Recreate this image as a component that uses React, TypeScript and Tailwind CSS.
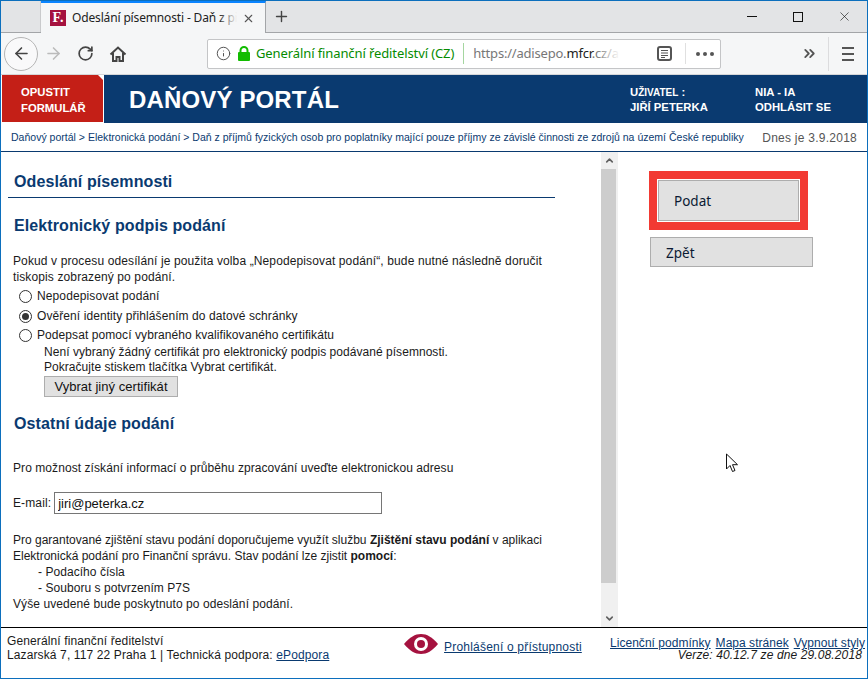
import React from 'react'
import { ArrowLeft, ArrowRight, RotateCw, Plus, X, Info, ChevronsRight, ChevronUp, ChevronDown } from 'lucide-react'

const Tabs = () => {
  return (
    <div className="flex h-[32px] bg-[#e3e4e6] border-b border-[#a3a5a8]">
      <div className="w-[40px] border-r border-[#c9cacc]"></div>
      <div className="w-[225px] h-[32px] bg-[#f5f6f7] border-t-2 border-t-[#0a84ff] border-r border-r-[#a3a5a8] flex items-center pl-[9px] pr-[10px]">
        <div className="w-[16px] h-[16px] bg-[#a5123f] flex items-center justify-center text-white font-bold text-[14px] leading-none font-['Liberation_Serif',serif]">F.</div>
        <div className="relative ml-[6px] w-[165px] overflow-hidden whitespace-nowrap text-[12px] tracking-[-0.15px] text-[#222] font-['Noto_Sans',sans-serif]">
          Odeslání písemnosti - Daň z příj
          <div className="absolute top-0 right-0 w-[18px] h-full bg-gradient-to-r from-transparent to-[#f5f6f7]"></div>
        </div>
        <X size={13} strokeWidth={2} className="ml-auto text-[#555]" />
      </div>
      <div className="w-[31px] flex items-center justify-center">
        <Plus size={17} strokeWidth={2} className="text-[#444]" />
      </div>
      <div className="ml-auto flex items-center text-[#111]">
        <div className="w-[46px] flex justify-center"><div className="w-[10px] h-px bg-[#111]"></div></div>
        <div className="w-[46px] flex justify-center"><div className="w-[10px] h-[10px] border border-[#111]"></div></div>
        <div className="w-[46px] flex justify-center"><X size={15} strokeWidth={1} /></div>
      </div>
    </div>
  )
}

const Toolbar = () => {
  return (
    <div className="flex items-center h-[42px] bg-[#f5f6f7] border-b border-[#d5d6d8] pl-[3px] text-[#444]">
      <div className="w-[34px] h-[34px] rounded-full border border-[#b5b5b5] bg-[#f9f9fa] flex items-center justify-center shrink-0">
        <ArrowLeft size={19} strokeWidth={2} className="text-[#444]" />
      </div>
      <ArrowRight size={19} strokeWidth={2} className="ml-[6px] text-[#bbb] shrink-0" />
      <RotateCw size={17} strokeWidth={2.4} className="ml-[14px] shrink-0" />
      <svg className="ml-[15px] shrink-0" width="18" height="18" viewBox="0 0 18 18" fill="none" stroke="#444" strokeWidth="2">
        <path d="M1.500 9.500 9 2.500l7.500 7" />
        <path d="M4 8v8h3.500v-4h3v4H14V8" />
      </svg>
      <div className="ml-[80px] w-[514px] h-[30px] shrink-0 bg-white border border-[#c4c5c7] rounded-[2px] flex items-center pl-[8px] whitespace-nowrap font-['Noto_Sans',sans-serif] text-[13px]">
        <Info size={15} strokeWidth={1.6} className="text-[#555] shrink-0" />
        <svg className="ml-[6px] shrink-0" width="14" height="15" viewBox="0 0 14 15">
          <path d="M3.500 6V4.500a3.500 3.500 0 0 1 7 0V6" fill="none" stroke="#12bc00" strokeWidth="2" />
          <rect x="1" y="6" width="12" height="9" rx="1" fill="#12bc00" />
        </svg>
        <span className="ml-[5px] tracking-[-0.1px] text-[#058b00]">Generální finanční ředitelství (CZ)</span>
        <div className="ml-[9px] w-px h-[21px] bg-[#a5d6a0] shrink-0"></div>
        <span className="relative ml-[9px] w-[147px] shrink-0 overflow-hidden tracking-[-0.2px] text-[#777]">
          https://adisepo.<span className="text-[#222]">mfcr</span>.cz/a
          <span className="absolute top-0 right-0 w-[24px] h-full bg-gradient-to-r from-transparent to-white"></span>
        </span>
        <svg className="ml-[37px] shrink-0" width="15" height="15" viewBox="0 0 15 15" fill="none" stroke="#555">
          <rect x="1" y="1" width="13" height="13" rx="2" strokeWidth="2" />
          <path d="M4 4.500h7M4 7h7M4 9.500h7M4 11.500h4" strokeWidth="1" />
        </svg>
        <div className="ml-[13px] w-px h-[21px] bg-[#e0e0e0] shrink-0"></div>
        <div className="ml-[10px] flex gap-[3px]">
          <div className="w-[4px] h-[4px] rounded-full bg-[#555]"></div>
          <div className="w-[4px] h-[4px] rounded-full bg-[#555]"></div>
          <div className="w-[4px] h-[4px] rounded-full bg-[#555]"></div>
        </div>
      </div>
      <ChevronsRight size={17} strokeWidth={2.6} className="ml-[80px] text-[#555] shrink-0" />
      <div className="ml-[10px] w-px h-[34px] bg-[#dcdcde] shrink-0"></div>
      <div className="ml-[13px] flex flex-col gap-[4px]">
        <div className="w-[12px] h-[2px] bg-[#555]"></div>
        <div className="w-[12px] h-[2px] bg-[#555]"></div>
        <div className="w-[12px] h-[2px] bg-[#555]"></div>
      </div>
    </div>
  )
}

const Header = () => {
  return (
    <div className="flex h-[48px] bg-[#0a3a70] text-white font-bold">
      <div className="relative w-[103px] h-[48px] bg-[#c41f17] border-l border-r border-b border-white pl-[19px] pt-[9px] text-[11.300px] leading-[16px]">
        <div className="absolute top-0 right-0 w-0 h-0 border-t-[5px] border-l-[5px] border-t-white border-l-transparent"></div>
        <div>OPUSTIT</div>
        <div>FORMULÁŘ</div>
      </div>
      <div className="ml-[25px] mt-[9px] text-[24px] leading-[32px] tracking-[0.15px]">DAŇOVÝ PORTÁL</div>
      <div className="ml-[291px] mt-[10px] text-[11.300px] leading-[15px] w-[125px]">
        <div>U<span className="text-[10px]">ŽIVATEL</span> :</div>
        <div>JIŘÍ PETERKA</div>
      </div>
      <div className="mt-[10px] text-[11.300px] leading-[15px]">
        <div>NIA - IA</div>
        <div>ODHLÁSIT SE</div>
      </div>
    </div>
  )
}

const Breadcrumb = () => {
  return (
    <div className="flex items-center justify-between h-[29px] pt-[2px] border-b border-[#0a3a70] pl-[10px] pr-[10px] whitespace-nowrap">
      <div className="text-[10.500px] text-[#0a3a70] tracking-[0.01px]">Daňový portál &gt; Elektronická podání &gt; Daň z příjmů fyzických osob pro poplatníky mající pouze příjmy ze závislé činnosti ze zdrojů na území České republiky</div>
      <div className="text-[12px] text-[#555] tracking-[0.25px]">Dnes je 3.9.2018</div>
    </div>
  )
}

const Radio = ({ checked }: { checked?: boolean }) => {
  return (
    <div className="w-[13px] h-[13px] rounded-full border border-[#333] bg-white flex items-center justify-center shrink-0">
      {checked && <div className="w-[7px] h-[7px] rounded-full bg-[#333]"></div>}
    </div>
  )
}

const Content = () => {
  return (
    <div className="w-[600px] h-[475px] overflow-hidden pl-[7px] text-[12px] leading-[16px] tracking-[0.12px] text-[#1a1a1a]">
      <div className="w-[547px] h-[46px] border-b border-[#0a3a70] pl-[6px] pt-[20px] text-[16px] leading-[19px] font-bold text-[#0a3a70] tracking-[0.1px]">Odeslání písemnosti</div>
      <h2 className="pl-[6px] mt-[18px] text-[16px] leading-[19px] font-bold text-[#0a3a70] tracking-[0.1px]">Elektronický podpis podání</h2>
      <div className="pl-[5px] pr-[20px] mt-[18px]">
        <p>Pokud v procesu odesílání je použita volba „Nepodepisovat podání“, bude nutné následně doručit<br />tiskopis zobrazený po podání.</p>
        <div className="flex items-center gap-[5px] pl-[6px] mt-[3px] h-[16px]"><Radio /><span>Nepodepisovat podání</span></div>
        <div className="flex items-center gap-[5px] pl-[6px] mt-[4px] h-[16px]"><Radio checked /><span className="tracking-[0.08px]">Ověření identity přihlášením do datové schránky</span></div>
        <div className="flex items-center gap-[5px] pl-[6px] mt-[3px] h-[16px]"><Radio /><span className="tracking-[0.08px]">Podepsat pomocí vybraného kvalifikovaného certifikátu</span></div>
        <div className="pl-[31px] mt-[2px] leading-[15px] tracking-[0.04px]">
          <p>Není vybraný žádný certifikát pro elektronický podpis podávané písemnosti.</p>
          <p>Pokračujte stiskem tlačítka Vybrat certifikát.</p>
          <button className="mt-[1px] w-[134px] h-[21px] bg-[#e1e1e1] border border-[#adadad] text-[13px] text-[#111]">Vybrat jiný certifikát</button>
        </div>
      </div>
      <h2 className="pl-[6px] mt-[17px] text-[16px] leading-[19px] font-bold text-[#0a3a70] tracking-[0.1px]">Ostatní údaje podání</h2>
      <p className="pl-[5px] mt-[27px] tracking-[0.07px]">Pro možnost získání informací o průběhu zpracování uveďte elektronickou adresu</p>
      <div className="flex items-center pl-[5px] mt-[16px]">
        <span>E-mail:</span>
        <input readOnly value="jiri@peterka.cz" className="ml-[3px] w-[328px] h-[22px] border border-[#767676] px-[3px] text-[13px] tracking-normal text-[#111] outline-none" />
      </div>
      <div className="pl-[5px] pr-[20px] mt-[18px]">
        <p className="tracking-normal">Pro garantované zjištění stavu podání doporučujeme využít službu <b>Zjištění stavu podání</b> v aplikaci<br />Elektronická podání pro Finanční správu. Stav podání lze zjistit <b>pomocí</b>:</p>
        <p className="pl-[25px] tracking-[0.05px]">- Podacího čísla</p>
        <p className="pl-[25px] tracking-[0.05px]">- Souboru s potvrzením P7S</p>
        <p className="tracking-[0.08px]">Výše uvedené bude poskytnuto po odeslání podání.</p>
      </div>
    </div>
  )
}

const Scrollbar = () => {
  return (
    <div className="w-[17px] h-[475px] bg-[#f0f0f0] flex flex-col items-center text-[#606060]">
      <div className="h-[17px] flex items-center justify-center"><ChevronUp size={11} strokeWidth={3.5} /></div>
      <div className="self-start w-[15px] h-[414px] bg-[#cdcdcd]"></div>
      <div className="mt-auto h-[17px] flex items-center justify-center"><ChevronDown size={11} strokeWidth={3.5} /></div>
    </div>
  )
}

const Actions = () => {
  return (
    <div className="relative flex-1 pl-[32px] pt-[27px] font-['Noto_Sans',sans-serif] text-[13.500px] text-[#0b1a33]">
      <div className="ml-[7px] w-[143px] h-[43px] outline-[8px] outline-solid outline-[#f23a33] border border-white">
        <button className="w-full h-full bg-[#e1e1e1] border border-[#adadad] text-left pl-[15px] pt-[2px]">Podat</button>
      </div>
      <button className="block mt-[15px] w-[163px] h-[30px] bg-[#e1e1e1] border border-[#adadad] text-left pl-[15px] pt-[2px]">Zpět</button>
      <svg className="absolute left-[107px] top-[301px]" width="13" height="20" viewBox="0 0 13 20" fill="white" stroke="#111">
        <path d="M1.500 1v15l3.500-3.500 2.500 6 2.500-1-2.500-5.800h5z" />
      </svg>
    </div>
  )
}

const Footer = () => {
  return (
    <div className="flex h-[51px] border-t border-black pl-[6px] pr-[2px] text-[12px] leading-[14px] tracking-[0.12px] text-[#1a1a1a]">
      <div className="w-[396px] pt-[6px] whitespace-nowrap">
        <div>Generální finanční ředitelství</div>
        <div>Lazarská 7, 117 22 Praha 1 | Technická podpora: <a className="underline text-[#0a3a70]" href="#">ePodpora</a></div>
      </div>
      <div className="ml-[3px] w-[207px] flex items-start pt-[5px] whitespace-nowrap">
        <svg className="shrink-0" width="34" height="22" viewBox="0 0 34 22">
          <path d="M0 11C6 4 11 1 17 1s11 3 17 10c-6 7-11 10-17 10S6 18 0 11z" fill="#a5123f" />
          <circle cx="17" cy="11" r="7" fill="white" />
          <circle cx="17" cy="11" r="4" fill="#a5123f" />
        </svg>
        <a className="ml-[6px] mt-[7px] underline text-[#0a3a70] tracking-[0.2px]" href="#">Prohlášení o přístupnosti</a>
      </div>
      <div className="ml-auto pt-[9px] text-right whitespace-nowrap leading-[12px]">
        <div className="flex gap-[5px] tracking-[0.03px]">
          <a className="underline text-[#0a3a70]" href="#">Licenční podmínky</a>
          <a className="underline text-[#0a3a70]" href="#">Mapa stránek</a>
          <a className="underline text-[#0a3a70]" href="#">Vypnout styly</a>
        </div>
        <div className="italic pr-[3px]">Verze: 40.12.7 ze dne 29.08.2018</div>
      </div>
    </div>
  )
}

const App = () => {
  return (
    <div className="w-[868px] h-[679px] overflow-hidden border border-[#0c6fbd] bg-white font-['Liberation_Sans',sans-serif]">
      <Tabs />
      <Toolbar />
      <Header />
      <Breadcrumb />
      <div className="flex">
        <Content />
        <Scrollbar />
        <Actions />
      </div>
      <Footer />
    </div>
  )
}

export default App
